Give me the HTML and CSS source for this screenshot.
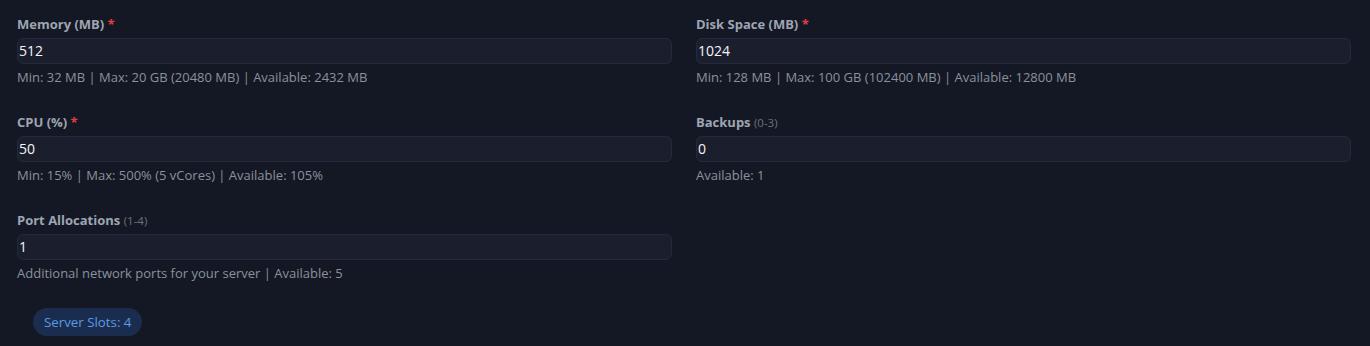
FILE: index.html
```html
<!DOCTYPE html>
<html>
<head>
<meta charset="utf-8">
<link rel="stylesheet" href="styles.css">
</head>
<body>
<div class="page">
  <div class="grid">
    <div class="field">
      <div class="label">Memory (MB) <span class="req">*</span></div>
      <div class="input">512</div>
      <div class="help">Min: 32 MB | Max: 20 GB (20480 MB) | Available: 2432 MB</div>
    </div>
    <div class="field">
      <div class="label">Disk Space (MB) <span class="req">*</span></div>
      <div class="input">1024</div>
      <div class="help">Min: 128 MB | Max: 100 GB (102400 MB) | Available: 12800 MB</div>
    </div>
    <div class="field">
      <div class="label">CPU (%) <span class="req">*</span></div>
      <div class="input">50</div>
      <div class="help">Min: 15% | Max: 500% (5 vCores) | Available: 105%</div>
    </div>
    <div class="field">
      <div class="label">Backups <span class="range">(0-3)</span></div>
      <div class="input">0</div>
      <div class="help">Available: 1</div>
    </div>
    <div class="field">
      <div class="label">Port Allocations <span class="range">(1-4)</span></div>
      <div class="input">1</div>
      <div class="help">Additional network ports for your server | Available: 5</div>
    </div>
  </div>
  <div class="badges">
    <span class="badge">Server Slots: 4</span>
  </div>
</div>
</body>
</html>
```
FILE: styles.css
```css
html, body {
  margin: 0;
  padding: 0;
  background: #141824;
}
body {
  font-family: "Open Sans", "Noto Sans", sans-serif;
  color: #e5e7eb;
  width: 1370px;
  height: 346px;
  overflow: hidden;
}
.page {
  padding: 14px 19px 0 17px;
}
.grid {
  display: grid;
  grid-template-columns: 655px 655px;
  column-gap: 24px;
  row-gap: 26px;
}
.field {
  display: flex;
  flex-direction: column;
}
.label {
  font-size: 13px;
  font-weight: 700;
  line-height: 20px;
  height: 20px;
  color: #9ea5b2;
  margin-bottom: 4px;
}
.req {
  color: #e53e3e;
}
.range {
  font-weight: 400;
  font-size: 11.5px;
  color: #6b7280;
}
.input {
  height: 26px;
  box-sizing: border-box;
  background: #1b1f2d;
  border: 1px solid #242a3b;
  border-radius: 6px;
  padding: 0 1px;
  line-height: 24px;
  font-size: 14px;
  color: #f3f4f6;
}
.help {
  margin-top: 4px;
  font-size: 13px;
  line-height: 18px;
  color: #8a919d;
}
.badges {
  margin-top: 26px;
  padding-left: 16px;
  display: flex;
}
.badge {
  display: inline-block;
  height: 28px;
  line-height: 28px;
  padding: 0 11px;
  border-radius: 14px;
  background: #1a2d4f;
  color: #5b9be6;
  font-size: 13.3px;
}
```
